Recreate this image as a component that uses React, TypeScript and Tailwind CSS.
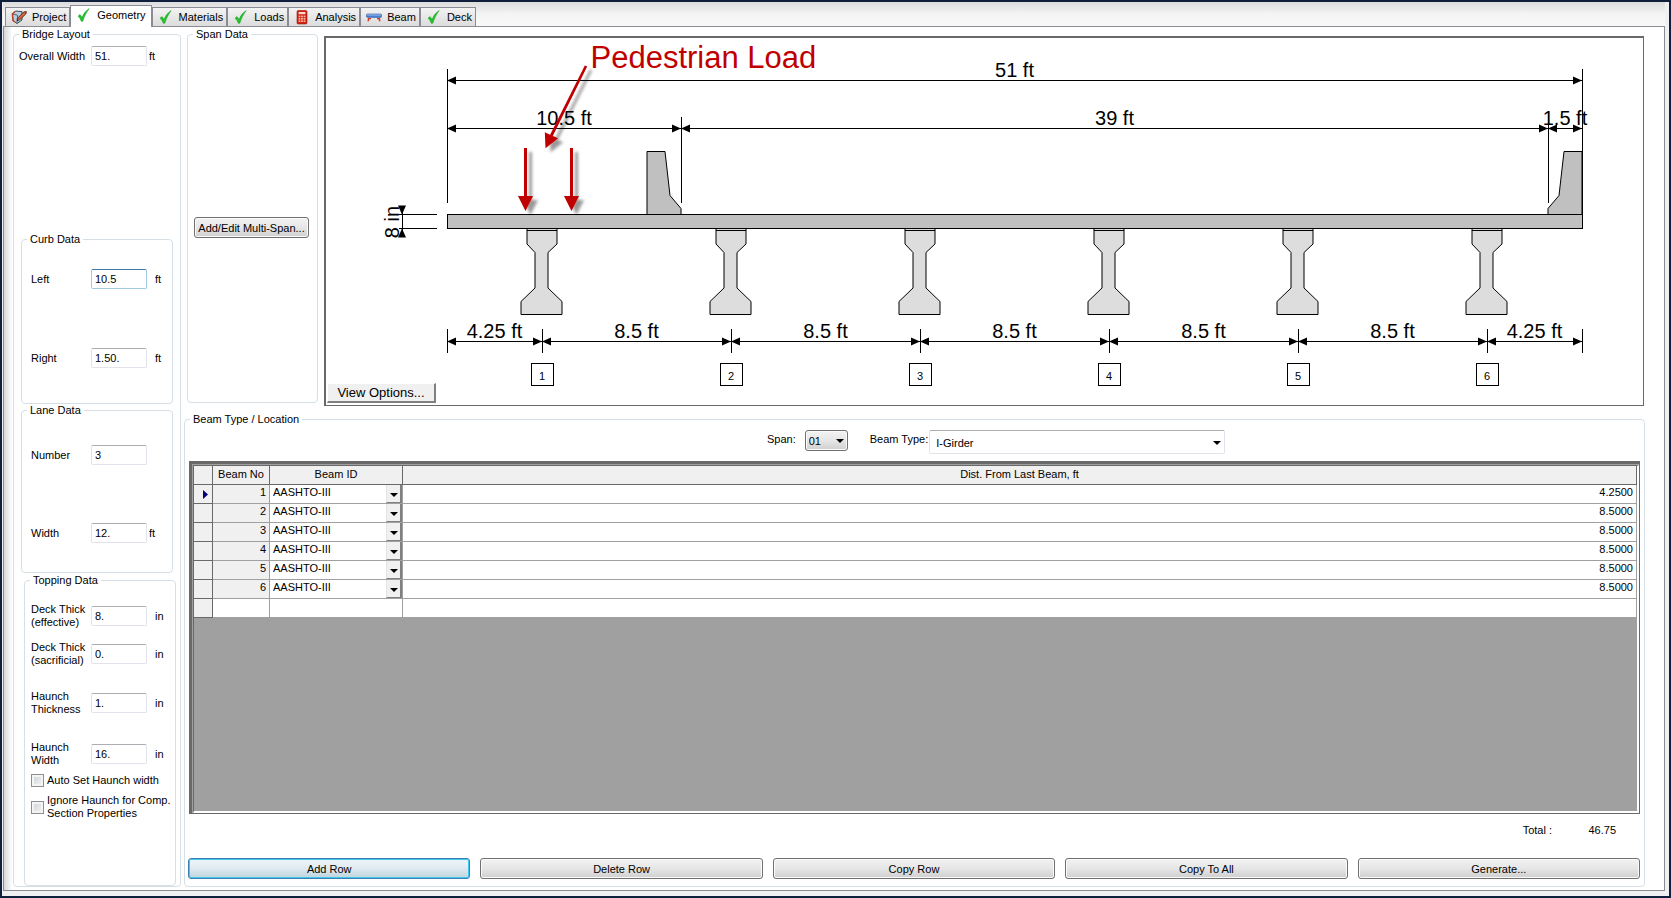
import { useState, type ReactNode } from 'react';
import clsx from 'clsx';

const CheckIcon = () => (
  <svg viewBox="0 0 16 16" className="h-4 w-4" aria-hidden="true">
    <path d="M2 9.2 L4 7.6 C5 8.6 5.6 9.6 6 10.8 C7.4 7 9.4 4 13.2 1.6 C10.6 5 8.4 9.4 6.8 14.2 L5.2 14.2 C4.6 12.2 3.6 10.4 2 9.2 Z" fill="#22c32b" stroke="#149a1c" strokeWidth="0.5" />
  </svg>
);

const ProjectIcon = () => (
  <svg viewBox="0 0 16 16" className="h-4 w-4" aria-hidden="true">
    <path d="M1.5 5 L4.5 2 L11 2.6 L11 11 L6 14.5 L2 11.5 Z" fill="#b9cfe0" stroke="#3c4a55" />
    <path d="M1.5 5 L6.5 6.2 L6 14.5" fill="none" stroke="#55636e" />
    <path d="M4 2.4 L1.3 5 L2 11.5 L4 13" fill="none" stroke="#b5482a" strokeWidth="1.4" />
    <path d="M6 11.6 L7 8.8 L12.6 3 L15.4 2.6 L14.8 5 L8.6 10.8 Z" fill="#e0653a" stroke="#3d2620" strokeWidth="0.9" />
  </svg>
);

const CalculatorIcon = () => (
  <svg viewBox="0 0 16 16" className="h-4 w-4" aria-hidden="true">
    <rect x="3" y="1.5" width="10" height="13.5" rx="1.2" fill="#cf2412" stroke="#9c1608" strokeWidth="0.6" />
    <rect x="4.6" y="3" width="6.8" height="2.2" fill="#ffd9cf" />
    {[6.6, 9, 11.4].map((y) =>
      [4.6, 7.1, 9.6].map((x) => <rect key={`${x}-${y}`} x={x} y={y} width="1.8" height="1.6" fill="#ffb9a8" />),
    )}
  </svg>
);

const BeamIcon = () => (
  <svg viewBox="0 0 16 16" className="h-4 w-4" aria-hidden="true">
    <rect x="0.5" y="5" width="15" height="3.4" rx="1" fill="#4a7fd0" stroke="#2f5aa5" strokeWidth="0.6" />
    <rect x="1" y="5.4" width="14" height="1.2" fill="#8db4ec" />
    <path d="M2 9 H5 V10.2 H3.4 L3 12.2 H1.4 Z M14 9 H11 V10.2 H12.6 L13 12.2 H14.6 Z" fill="#d43c2c" />
  </svg>
);

const tabs: { name: string; icon: ReactNode }[] = [
  { name: 'Project', icon: <ProjectIcon /> },
  { name: 'Geometry', icon: <CheckIcon /> },
  { name: 'Materials', icon: <CheckIcon /> },
  { name: 'Loads', icon: <CheckIcon /> },
  { name: 'Analysis', icon: <CalculatorIcon /> },
  { name: 'Beam', icon: <BeamIcon /> },
  { name: 'Deck', icon: <CheckIcon /> },
];

const beams = [4.25, 8.5, 8.5, 8.5, 8.5, 8.5];

function GroupBox({ title, className, children }: { title: string; className?: string; children?: ReactNode }) {
  return (
    <fieldset className={clsx('min-w-0 rounded-[4px] border border-[#d5dfe5]', className)}>
      <legend className="ml-[5px] px-[3px] leading-[13px]">{title}</legend>
      {children}
    </fieldset>
  );
}

interface FieldProps {
  id: string;
  label: ReactNode;
  value: string;
  unit?: string;
  tight?: boolean;
  active?: boolean;
  wide?: boolean;
  className?: string;
}

function Field({ id, label, value, unit, tight, active, wide, className }: FieldProps) {
  return (
    <div className={clsx('flex h-5 items-center', className)}>
      <label htmlFor={id} className={clsx('shrink-0 whitespace-nowrap leading-[13px]', wide ? 'w-[72px]' : 'w-[60px]')}>
        {label}
      </label>
      <input
        id={id}
        defaultValue={value}
        className={clsx(
          'h-5 w-14 shrink-0 rounded-[2px] border bg-white px-[3px] outline-none',
          active ? 'border-[#a4c9e3] border-t-[#3d7bad]' : 'border-[#e2e3ea] border-t-[#abadb3]',
        )}
      />
      {unit && <span className={tight ? 'ml-[2px]' : 'ml-2'}>{unit}</span>}
    </div>
  );
}

function CheckField({ id, children }: { id: string; children: ReactNode }) {
  return (
    <div className="flex items-center gap-[3px]">
      <input
        id={id}
        type="checkbox"
        className="h-[13px] w-[13px] shrink-0 appearance-none border border-[#8e8f8f] bg-linear-to-br from-[#cbcfd5] to-[#f6f6f6] shadow-[inset_0_0_0_2px_#f4f4f4] checked:bg-[#4b6fa8]"
      />
      <label htmlFor={id} className="whitespace-nowrap leading-[13px]">{children}</label>
    </div>
  );
}

const Caret = ({ className }: { className?: string }) => (
  <svg viewBox="0 0 8 4" className={clsx('pointer-events-none absolute h-1 w-2', className)} aria-hidden="true">
    <path d="M0 0 H8 L4 4 Z" fill="#000" />
  </svg>
);

// Bridge cross section. Horizontal positions come from feet, 0 is the left edge of the slab.
const X0 = 121.5;
const SCALE = 22.25;
const SLAB_TOP = 176.5;
const SLAB_BOTTOM = 190.5;
const px = (ft: number) => Math.floor(X0 + ft * SCALE) + 0.5;

function Dimension({ from, to, y, text }: { from: number; to: number; y: number; text: string }) {
  const a = px(from);
  const b = px(to);
  return (
    <g>
      <path d={`M${a} ${y} H${b}`} stroke="#000" shapeRendering="crispEdges" />
      <path d={`M${a} ${y} l9 -4 v8 Z M${b} ${y} l-9 -4 v8 Z`} />
      <text x={(a + b) / 2} y={y - 4} textAnchor="middle" fontSize="20">{text}</text>
    </g>
  );
}

function Girder({ at, label }: { at: number; label: number }) {
  const x = px(at);
  return (
    <g stroke="#000">
      <path
        d={`M${x - 15} ${SLAB_BOTTOM} H${x + 15} V206 L${x + 6} 214.5 V250 L${x + 20} 263.5 V276.5 H${x - 21} V263.5 L${x - 7} 250 V214.5 L${x - 15} 206 Z`}
        fill="#ddd"
      />
      <path d={`M${x - 15} 192.5 H${x + 15} M${x} 291 V315`} shapeRendering="crispEdges" />
      <rect x={x - 11} y="325.5" width="22" height="22" fill="#fff" shapeRendering="crispEdges" />
      <text x={x} y="342" textAnchor="middle" fontSize="11" stroke="none">{label}</text>
    </g>
  );
}

const LoadArrow = ({ x }: { x: number }) => (
  <path d={`M${x - 1.5} 110 h3 v48 h6 L${x} 173 L${x - 7.5} 158 h6 Z`} />
);

function CrossSection() {
  let offset = 0;
  const positions = beams.map((distance) => (offset += distance));

  return (
    <svg viewBox="1 0 1316 367" className="block h-[367px] w-full" fontFamily="'Liberation Sans', Arial, sans-serif" role="img" aria-label="Bridge cross section">
      <defs>
        <filter id="arrow-shadow" x="-50%" y="-20%" width="220%" height="150%">
          <feDropShadow dx="5" dy="4" stdDeviation="1.6" floodColor="#000" floodOpacity="0.4" />
        </filter>
      </defs>

      <g stroke="#000" shapeRendering="crispEdges">
        <path d={`M${px(0)} 31 V165 M${px(51)} 31 V190 M${px(10.5)} 79 V165 M${px(49.5)} 79 V165`} />
        <path d={`M${px(0)} 291 V315 M${px(51)} 291 V315`} />
        <rect x={px(0)} y={SLAB_TOP} width={px(51) - px(0)} height={SLAB_BOTTOM - SLAB_TOP} fill="#c0c0c0" />
      </g>
      <path d="M321.5 176.5 V113.5 H339.5 L344.5 157.5 L355.5 170.5 V176.5 Z" fill="#c0c0c0" stroke="#000" />
      <path d="M1256.5 176.5 V113.5 H1238.5 L1233.5 157.5 L1222.5 170.5 V176.5 Z" fill="#c0c0c0" stroke="#000" />

      {positions.map((at, i) => (
        <Girder key={at} at={at} label={i + 1} />
      ))}

      <Dimension from={0} to={51} y={42.5} text="51 ft" />
      <Dimension from={0} to={10.5} y={90.5} text="10.5 ft" />
      <Dimension from={10.5} to={49.5} y={90.5} text="39 ft" />
      <Dimension from={49.5} to={51} y={90.5} text="1.5 ft" />
      {positions.map((at, i) => (
        <Dimension key={at} from={at - beams[i]} to={at} y={303.5} text={`${beams[i]} ft`} />
      ))}
      <Dimension from={46.75} to={51} y={303.5} text="4.25 ft" />

      <path d="M73 176.5 H111 M73 190.5 H111 M76.5 168 V199" stroke="#000" shapeRendering="crispEdges" />
      <path d="M76.5 176.5 l-4 -9 h8 Z M76.5 190.5 l-4 9 h8 Z" />
      <text transform="translate(73 184) rotate(-90)" textAnchor="middle" fontSize="20">8 in</text>

      <g fill="#c00000" filter="url(#arrow-shadow)">
        <LoadArrow x={200} />
        <LoadArrow x={246} />
        <path d="M259.3 27.4 L261.7 28.6 L227.3 98 L232.7 100.3 L220 110.3 L219.3 94.3 L224.6 96.7 Z" />
      </g>
      <text x="265" y="30" fontSize="31" fill="#c00000">Pedestrian Load</text>
    </svg>
  );
}

function BeamTable() {
  const selector = 'border-r border-b border-[#696969] bg-[#f0f0f0] p-0';
  const heading = clsx(selector, 'align-top font-normal leading-4');
  const cell = 'border-r border-b border-[#a0a0a0] px-[3px] py-0 leading-[14px] align-top';
  return (
    <table className="w-full table-fixed border-separate border-spacing-0">
      <colgroup>
        <col className="w-[19px]" />
        <col className="w-[57px]" />
        <col className="w-[133px]" />
        <col />
      </colgroup>
      <thead>
        <tr className="h-[19px]">
          <th className={selector} aria-label="Row" />
          <th className={heading}>Beam No</th>
          <th className={heading}>Beam ID</th>
          <th className={heading}>Dist. From Last Beam, ft</th>
        </tr>
      </thead>
      <tbody className="bg-white">
        {beams.map((distance, i) => (
          <tr key={i} className="h-[19px]">
            <td className={selector}>
              {i === 0 && (
                <svg viewBox="0 0 5 9" className="ml-[9px] h-[9px] w-[5px]" aria-hidden="true">
                  <path d="M0 0 L5 4.5 L0 9 Z" fill="#000080" />
                </svg>
              )}
            </td>
            <td className={clsx(cell, 'bg-[#f0f0f0] text-right')}>{i + 1}</td>
            <td className={clsx(cell, 'relative')}>
              <select aria-label={`Beam ID ${i + 1}`} className="block h-[14px] w-full appearance-none bg-transparent leading-[14px] outline-none">
                <option>AASHTO-III</option>
              </select>
              <span className="pointer-events-none absolute inset-y-0 right-0 w-4 border-r-2 border-b border-l border-r-[#808080] border-b-[#808080] border-l-[#e3e3e3] bg-[#f0f0f0]">
                <Caret className="top-2 left-[3px]" />
              </span>
            </td>
            <td className={clsx(cell, 'text-right')}>{distance.toFixed(4)}</td>
          </tr>
        ))}
        <tr className="h-[19px]">
          <td className={selector} />
          <td className={cell} />
          <td className={cell} />
          <td className={cell} />
        </tr>
      </tbody>
    </table>
  );
}

const buttonFace = 'rounded-[3px] border border-[#707070] bg-linear-to-b from-[#f2f2f2] via-[#e6e6e6] to-[#cfcfcf] shadow-[inset_0_0_0_1px_#fbfbfb]';

export default function App() {
  const [current, setCurrent] = useState('Geometry');
  const total = beams.reduce((sum, distance) => sum + distance, 0);

  return (
    <div className="flex min-h-screen flex-col border-2 border-[#10203c] bg-[#f0f0f0] pr-1 pb-[5px] pl-px font-['Liberation_Sans',Arial,sans-serif] text-[11px] leading-4 text-black">
      <div className="flex h-6 items-end bg-linear-to-b from-[#dcdcdc] via-[#f4f4f4] to-[#f8f8f8] pl-[2px]" role="tablist">
        {tabs.map(({ name, icon }) => (
          <button
            key={name}
            role="tab"
            aria-selected={name === current}
            onClick={() => setCurrent(name)}
            className={clsx(
              'flex items-center gap-[5px] border border-b-0 border-[#898c95] whitespace-nowrap',
              name === current ? 'z-10 -mb-px h-[22px] bg-white px-[5px] pb-[3px]' : 'h-[19px] bg-linear-to-b from-[#f3f3f3] to-[#dcdcdc] pr-[3px] pl-[5px]',
            )}
          >
            {icon}
            {name}
          </button>
        ))}
      </div>

      <main className="flex grow border border-[#898c95] bg-linear-to-r from-[#d6d6dc] to-white to-[8px] pt-px pr-[19px] pb-[3px] pl-[9px]">
        <GroupBox title="Bridge Layout" className="w-[168px] shrink-0">
          <Field id="overall-width" label="Overall Width" value="51." unit="ft" wide tight className="mt-[5px] ml-[5px]" />

          <GroupBox title="Curb Data" className="mt-[167px] ml-[7px] h-[171px] w-[152px]">
            <div className="pl-[9px]">
              <Field id="curb-left" label="Left" value="10.5" unit="ft" active className="mt-[23px]" />
              <Field id="curb-right" label="Right" value="1.50." unit="ft" className="mt-[59px]" />
            </div>
          </GroupBox>

          <GroupBox title="Lane Data" className="ml-[7px] h-[169px] w-[152px]">
            <div className="pl-[9px]">
              <Field id="lane-number" label="Number" value="3" className="mt-7" />
              <Field id="lane-width" label="Width" value="12." unit="ft" tight className="mt-[58px]" />
            </div>
          </GroupBox>

          <GroupBox title="Topping Data" className="mt-px ml-[10px] h-[312px] w-[152px]">
            <div className="pl-[6px]">
              <Field id="deck-effective" label={<>Deck Thick<br />(effective)</>} value="8." unit="in" className="mt-[19px]" />
              <Field id="deck-sacrificial" label={<>Deck Thick<br />(sacrificial)</>} value="0." unit="in" className="mt-[18px]" />
              <Field id="haunch-thickness" label={<>Haunch<br />Thickness</>} value="1." unit="in" className="mt-[29px]" />
              <Field id="haunch-width" label={<>Haunch<br />Width</>} value="16." unit="in" className="mt-[31px] mb-[10px]" />
              <div className="flex flex-col gap-[7px]">
                <CheckField id="auto-haunch">Auto Set Haunch width</CheckField>
                <CheckField id="ignore-haunch">Ignore Haunch for Comp.<br />Section Properties</CheckField>
              </div>
            </div>
          </GroupBox>
        </GroupBox>

        <div className="ml-[3px] flex min-w-0 grow flex-col">
          <div className="flex items-start pr-px pl-[3px]">
            <GroupBox title="Span Data" className="h-[375px] w-[131px] shrink-0">
              <button className={clsx(buttonFace, 'mt-44 ml-[6px] h-[21px] w-[115px] whitespace-nowrap')}>Add/Edit Multi-Span...</button>
            </GroupBox>
            <div className="relative mt-2 ml-[6px] min-w-0 grow border-t-2 border-r border-b border-l-2 border-[#696969] bg-white">
              <CrossSection />
              <button className="absolute bottom-[2px] left-px h-5 w-[109px] border-t border-r-2 border-b-2 border-l border-t-white border-r-[#808080] border-b-[#808080] border-l-white bg-[#f0f0f0] text-[13px]">
                View Options...
              </button>
            </div>
          </div>

          <GroupBox title="Beam Type / Location" className="mt-[7px] flex grow flex-col pr-1 pb-[7px]">
            <div className="mt-1 flex items-start pl-[40%]">
              <label htmlFor="span" className="pt-px">Span:</label>
              <div className="relative ml-[9px]">
                <select id="span" className={clsx(buttonFace, 'h-[21px] w-[43px] appearance-none pl-[3px]')}>
                  <option>01</option>
                </select>
                <Caret className="top-[9px] right-1" />
              </div>
              <label htmlFor="beam-type" className="ml-[22px] pt-px">Beam Type:</label>
              <div className="relative ml-px">
                <select id="beam-type" className="h-6 w-[296px] appearance-none rounded-[2px] border border-[#e2e3ea] border-t-[#abadb3] bg-white pt-px pl-[6px]">
                  <option>I-Girder</option>
                </select>
                <Caret className="top-[11px] right-1" />
              </div>
            </div>

            <div className="mt-[7px] ml-1 flex grow border-t-[3px] border-r border-b border-l-[3px] border-[#696969] bg-[#a0a0a0] pt-px pl-px">
              <div className="grow border-t border-r-2 border-b-2 border-l border-t-[#696969] border-r-white border-b-white border-l-[#696969]">
                <BeamTable />
              </div>
            </div>

            <div className="mt-2 flex justify-end pr-6">
              <span>Total :</span>
              <output className="w-16 text-right">{total.toFixed(2)}</output>
            </div>

            <div className="mt-5 ml-[3px] grid grid-cols-5 gap-[10px]">
              {['Add Row', 'Delete Row', 'Copy Row', 'Copy To All', 'Generate...'].map((name, i) => (
                <button
                  key={name}
                  className={clsx(
                    'h-[21px]',
                    i === 0
                      ? 'rounded-[3px] border border-[#3c7fb1] bg-linear-to-b from-[#f0f6f9] via-[#dfeaf0] to-[#bfd3dd] shadow-[inset_0_0_0_1px_#3fc8f0]'
                      : buttonFace,
                  )}
                >
                  {name}
                </button>
              ))}
            </div>
          </GroupBox>
        </div>
      </main>
    </div>
  );
}
